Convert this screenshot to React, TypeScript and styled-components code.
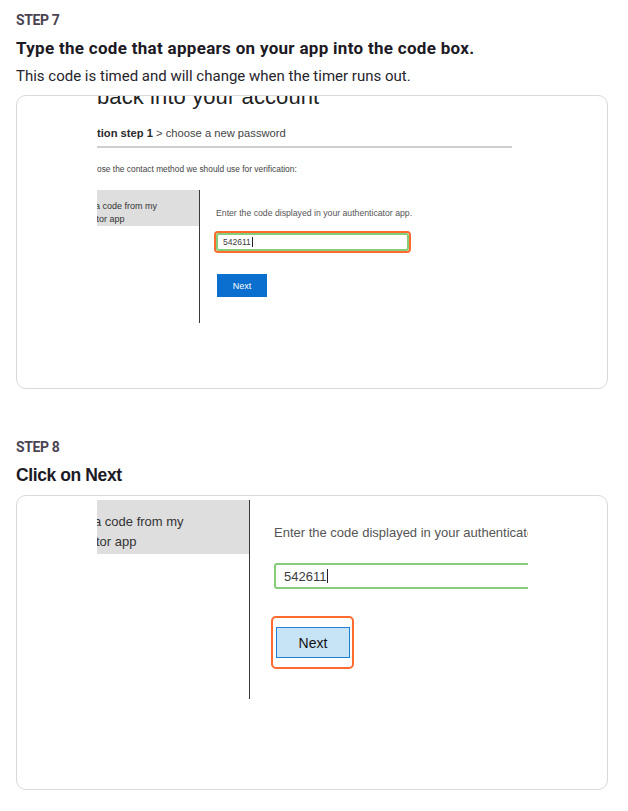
import React from 'react';
import styled, {createGlobalStyle} from 'styled-components';

const GlobalStyle = createGlobalStyle`
  html, body {
    margin: 0;
    padding: 0;
    background: #ffffff;
  }
  body {
    font-family: Roboto, "Liberation Sans", sans-serif;
  }
`;

const Page = styled.div`
  width: 592px;
  padding: 11px 0 20px 16px;
`;

const Section = styled.section<{gap?: number}>`
  margin-top: ${p => p.gap || 0}px;
`;

const StepLabel = styled.div`
  font-family: Roboto, sans-serif;
  font-size: 14px;
  line-height: 18px;
  font-weight: 700;
  letter-spacing: -0.4px;
  color: #4a4452;
`;

const Title = styled.h2<{plain?: boolean}>`
  margin: 9px 0 0;
  font-family: ${p => (p.plain ? '"Liberation Sans", Arial, sans-serif' : 'Roboto, sans-serif')};
  font-size: ${p => (p.plain ? '17.5px' : '17px')};
  line-height: 20px;
  font-weight: 700;
  letter-spacing: ${p => (p.plain ? '-0.4px' : '0.3px')};
  color: #1c1a24;
`;

const Lead = styled.p`
  margin: 8px 0 0;
  font-family: Roboto, sans-serif;
  font-size: 15px;
  line-height: 20px;
  color: #26242c;
`;

const Card = styled.div<{h: number; gap: number}>`
  box-sizing: border-box;
  height: ${p => p.h}px;
  margin-top: ${p => p.gap}px;
  border: 1px solid #d9d9d9;
  border-radius: 10px;
  overflow: hidden;
  background: #fff;
`;

/* the captured screen inside each card */
const Shot = styled.div<{w: number}>`
  width: ${p => p.w}px;
  margin-left: 80px;
  overflow: hidden;
  font-family: "Liberation Sans", Arial, sans-serif;
  color: #333;
`;

/* only the bottom of this heading shows, the capture cuts it at the card's top */
const BigTitle = styled.div`
  font-size: 22px;
  line-height: 2px;
  letter-spacing: 0.1px;
  color: #222;
  white-space: nowrap;
`;

const Crumb = styled.div`
  margin-top: 28px;
  font-size: 11.2px;
  line-height: 14px;
  color: #444;
  white-space: nowrap;
  b {
    color: #2a2a2a;
  }
`;

const Rule = styled.div`
  margin-top: 6px;
  width: 415px;
  height: 2px;
  background: #cfcfcf;
`;

const Hint = styled.div`
  margin-top: 16px;
  font-size: 8.4px;
  line-height: 10px;
  color: #444;
  white-space: nowrap;
`;

const Split = styled.div<{h: number; gap: number}>`
  display: flex;
  height: ${p => p.h}px;
  margin-top: ${p => p.gap}px;
`;

const Side = styled.div<{w: number}>`
  box-sizing: border-box;
  flex: 0 0 ${p => p.w}px;
  border-right: 1px solid #3a3a3a;
`;

const Option = styled.div<{h: number; size: number; lh: number; pt: number}>`
  box-sizing: border-box;
  height: ${p => p.h}px;
  padding-top: ${p => p.pt}px;
  overflow: hidden;
  background: #dedede;
  font-size: ${p => p.size}px;
  line-height: ${p => p.lh}px;
  color: #333;
  white-space: nowrap;
`;

const OptionLine = styled.span<{cut: number}>`
  display: block;
  margin-left: -${p => p.cut}px;
`;

const Main = styled.div<{pl: number; pt: number}>`
  flex: 1;
  min-width: 0;
  overflow: hidden;
  padding-left: ${p => p.pl}px;
  padding-top: ${p => p.pt}px;
`;

const Prompt = styled.div<{size: number; lh: number}>`
  font-size: ${p => p.size}px;
  line-height: ${p => p.lh}px;
  color: #555;
  white-space: nowrap;
`;

const Ring = styled.div<{gap: number; shift: number}>`
  box-sizing: border-box;
  display: inline-block;
  margin-top: ${p => p.gap}px;
  margin-left: ${p => p.shift}px;
  border: 2px solid #ff6a2f;
  border-radius: 4px;
`;

const FieldSlot = styled.div<{gap: number}>`
  margin-top: ${p => p.gap}px;
`;

const CodeField = styled.div<{w: number; h: number; size: number; pl: number; open?: boolean}>`
  box-sizing: border-box;
  display: flex;
  align-items: center;
  width: ${p => p.w}px;
  height: ${p => p.h}px;
  padding-left: ${p => p.pl}px;
  border: 2px solid #86cd79;
  border-right: ${p => (p.open ? 'none' : '2px solid #86cd79')};
  border-radius: 3px;
  background: #fff;
  font-size: ${p => p.size}px;
  color: #3c3c3c;
`;

const Caret = styled.span`
  display: inline-block;
  width: 1px;
  height: 1.15em;
  margin-left: 1px;
  background: #222;
`;

const BlueButton = styled.div`
  box-sizing: border-box;
  display: flex;
  align-items: center;
  justify-content: center;
  width: 50px;
  height: 23px;
  margin-top: 21px;
  margin-left: 1px;
  background: #0b6fcf;
  color: #fff;
  font-size: 9px;
`;

const PressedButton = styled.div`
  box-sizing: border-box;
  display: flex;
  align-items: center;
  justify-content: center;
  width: 74px;
  height: 31px;
  background: #c7e3f6;
  border: 1px solid #1f7fd5;
  color: #111;
  font-size: 14px;
`;

const ButtonRing = styled(Ring)`
  padding: 9px 2px 9px 3px;
  border-radius: 5px;
`;

const Column = styled.div`
  display: flex;
  flex-direction: column;
  align-items: flex-start;
`;

const App = () => (
  <>
    <GlobalStyle/>
    <Page>
      <Section>
        <StepLabel>STEP 7</StepLabel>
        <Title>Type the code that appears on your app into the code box.</Title>
        <Lead>This code is timed and will change when the timer runs out.</Lead>
        <Card h={294} gap={9}>
          <Shot w={432}>
            <BigTitle>back into your account</BigTitle>
            <Crumb><b>tion step 1</b> &gt; choose a new password</Crumb>
            <Rule/>
            <Hint>ose the contact method we should use for verification:</Hint>
            <Split h={133} gap={16}>
              <Side w={103}>
                <Option h={36} size={9} lh={13} pt={10}>
                  <OptionLine cut={2}>a code from my</OptionLine>
                  <OptionLine cut={0.5}>tor app</OptionLine>
                </Option>
              </Side>
              <Main pl={16} pt={17}>
                <Column>
                  <Prompt size={8.7} lh={12}>Enter the code displayed in your authenticator app.</Prompt>
                  <Ring gap={12} shift={-2}>
                    <CodeField w={193} h={18} size={8.5} pl={5}>542611<Caret/></CodeField>
                  </Ring>
                  <BlueButton>Next</BlueButton>
                </Column>
              </Main>
            </Split>
          </Shot>
        </Card>
      </Section>

      <Section gap={49}>
        <StepLabel>STEP 8</StepLabel>
        <Title plain>Click on Next</Title>
        <Card h={295} gap={10}>
          <Shot w={431}>
            <Split h={199} gap={4}>
              <Side w={153}>
                <Option h={54} size={13} lh={20} pt={12}>
                  <OptionLine cut={3}>a code from my</OptionLine>
                  <OptionLine cut={1}>tor app</OptionLine>
                </Option>
              </Side>
              <Main pl={24} pt={25}>
                <Column>
                  <Prompt size={13} lh={16}>Enter the code displayed in your authenticator app.</Prompt>
                  <FieldSlot gap={22}>
                    <CodeField w={300} h={26} size={13} pl={8} open>542611<Caret/></CodeField>
                  </FieldSlot>
                  <ButtonRing gap={27} shift={-3}>
                    <PressedButton>Next</PressedButton>
                  </ButtonRing>
                </Column>
              </Main>
            </Split>
          </Shot>
        </Card>
      </Section>
    </Page>
  </>
);

export default App;
